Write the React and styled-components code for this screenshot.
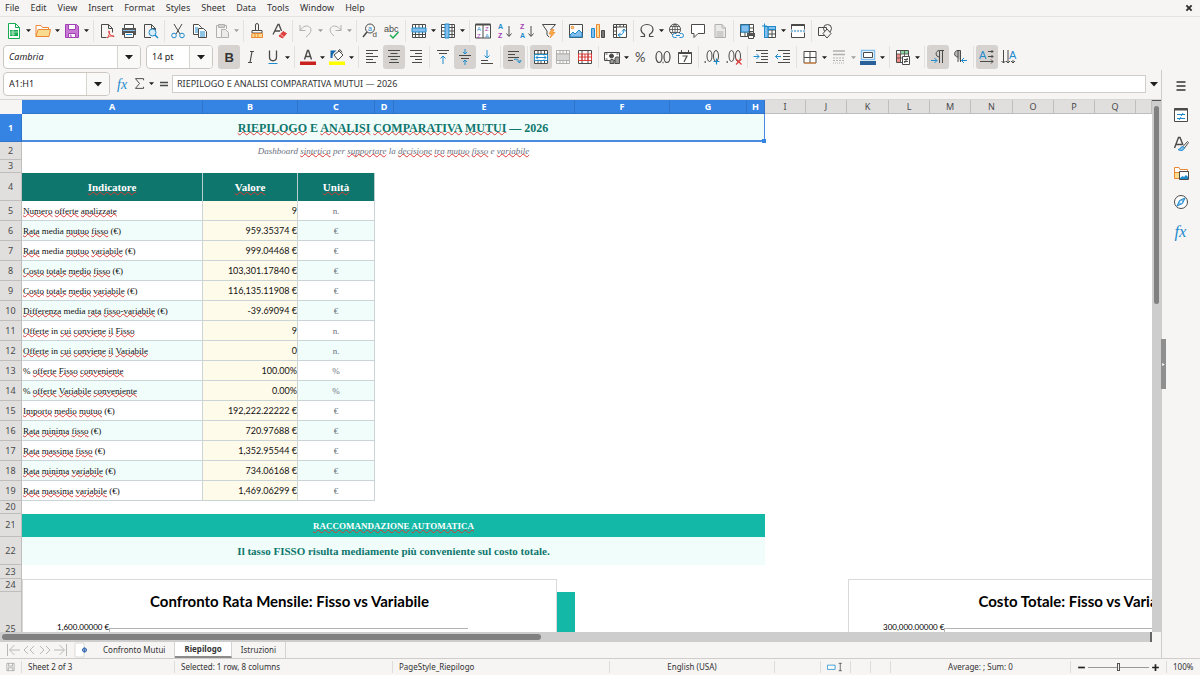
import React from 'react';
import styled, { createGlobalStyle, css } from 'styled-components';

const GlobalStyle = createGlobalStyle`
    *{
        box-sizing: border-box;
    }

    body{
        margin: 0;
        background-color: #f6f5f4;
        color: #333;
        font-family: "Noto Sans", "Open Sans", sans-serif;
        font-size: 9px;
        line-height: 16px;
    }

    button, input{
        font: inherit;
        color: inherit;
    }
`;

const Window = styled.div`
    display: flex;
    flex-direction: column;
    height: 100vh;
    overflow: hidden;
`;

const MenuBar = styled.nav`
    display: flex;
    align-items: center;
    gap: 11px;
    height: 17px;
    padding: 0 5px;
    border-bottom: 1px solid #e6e4e2;
`;

const MenuItem = styled.button`
    padding: 0;
    border: 0;
    background: none;
    line-height: 16px;
`;

const CloseButton = styled(MenuItem)`
    display: flex;
    margin-left: auto;
`;

const Toolbar = styled.div`
    display: flex;
    align-items: center;
    height: ${props => (props.$compact ? 26 : 27)}px;
    padding-left: 3px;
`;

const ToolButton = styled.button`
    display: flex;
    align-items: center;
    justify-content: center;
    width: ${props => (props.$narrow ? 16 : 22)}px;
    height: 24px;
    padding: 0;
    border: 0;
    border-radius: 3px;
    background-color: ${props => (props.$active ? '#d5d2cf' : 'transparent')};
    opacity: ${props => (props.$faded ? 0.4 : 1)};
`;

const DropButton = styled.button`
    display: flex;
    align-items: center;
    justify-content: center;
    width: 7px;
    height: 24px;
    padding: 0;
    border: 0;
    background: none;
    opacity: ${props => (props.$faded ? 0.4 : 1)};
`;

const Separator = styled.span`
    width: 1px;
    height: 22px;
    margin: 0 2px;
    background-color: #e4e2e0;

    ${DropButton} + &{
        margin-left: 3px;
    }
`;

const Combo = styled.div`
    display: flex;
    width: ${props => props.$width}px;
    height: 24px;
    margin-right: 5px;
    border: 1px solid #cdc7c2;
    border-radius: 4px;
    background-color: #fff;
    overflow: hidden;
`;

const ComboInput = styled.input`
    flex: 1;
    min-width: 0;
    padding: 0 5px;
    border: 0;
    outline: 0;
    background: none;
    color: #1e2224;
    font-style: ${props => (props.$italic ? 'italic' : 'normal')};
`;

const ComboArrow = styled.button`
    display: flex;
    align-items: center;
    justify-content: center;
    width: 23px;
    padding: 0;
    border: 0;
    border-left: 1px solid #d8d4d0;
    background-color: #f9f9f8;
`;

const Workspace = styled.div`
    display: flex;
    flex: 1;
    min-height: 0;
`;

const Document = styled.main`
    display: flex;
    flex: 1;
    flex-direction: column;
    min-width: 0;
    border-right: 1px solid #cfccc9;
`;

const FormulaBar = styled.div`
    display: flex;
    align-items: center;
    height: 30px;
    padding: 0 0 2px 3px;
    border-bottom: 1px solid #d8d6d3;
`;

const FormulaInput = styled.input`
    flex: 1;
    min-width: 0;
    height: 18px;
    padding: 0 4px;
    border: 1px solid #d0cecb;
    outline: 0;
    background-color: #fff;
`;

const SigmaDrop = styled(DropButton)`
    width: 9px;
`;

const FormulaDrop = styled(DropButton)`
    width: 15px;
`;

const SheetRow = styled.div`
    display: flex;
    flex: 1;
    min-height: 0;
`;

const SheetArea = styled.div`
    position: relative;
    flex: 1;
    min-width: 0;
    background-color: #fff;
    overflow: hidden;
`;

const Grid = styled.table`
    width: 100%;
    table-layout: fixed;
    border-collapse: separate;
    border-spacing: 0;
    font-family: "Liberation Serif", serif;
    font-size: 9px;
    line-height: 12px;
`;

const Head = styled.th`
    padding: 0;
    border: solid ${props => (props.$selected ? '#2f74c8' : '#bfbebc')};
    border-width: 0 1px 1px 0;
    background-color: ${props => (props.$selected ? '#3584e4' : '#e0dfde')};
    color: ${props => (props.$selected ? '#fff' : '#4a4a4a')};
    font-family: "Noto Sans", sans-serif;
    font-size: 9px;
    font-weight: ${props => (props.$selected ? 700 : 400)};
    line-height: 12px;
`;

const Corner = styled.td`
    height: 14px;
    padding: 0;
    background-color: #f6f5f4;
`;

const Row = styled.tr`
    height: ${props => props.$height}px;
`;

const Cell = styled.td`
    padding: 0 1px;
    white-space: nowrap;
    text-align: ${props => props.$align || 'left'};
    text-underline-offset: -1px;
`;

const TitleCell = styled(Cell)`
    position: relative;
    padding-top: 2px;
    border: solid #4a8ae0;
    border-width: 0 1px 2px 0;
    background-color: #f0fdfa;
    color: #0f766e;
    font-size: 12px;
    font-weight: 700;
`;

const FillHandle = styled.span`
    position: absolute;
    right: -2px;
    bottom: -3px;
    width: 4px;
    height: 4px;
    background-color: #3584e4;
`;

const SubtitleCell = styled(Cell)`
    color: #6b7280;
    font-style: italic;
`;

const HeaderCell = styled(Cell)`
    border-right: 1px solid #b9cfcd;
    background-color: #0f766e;
    color: #fff;
    font-size: 11px;
    font-weight: 700;
    text-underline-offset: 0;
`;

const dataBorder = css`
    border: solid #cbd5d8;
    border-width: 0 1px 1px 0;
`;

const LabelCell = styled(Cell)`
    ${dataBorder}
    padding-top: 1px;
    background-color: ${props => (props.$even ? '#f0fdfa' : '#fff')};
    color: #111;
`;

const ValueCell = styled(Cell)`
    ${dataBorder}
    padding-right: 0;
    background-color: #fffbeb;
    color: #111;
    font-family: Lato, sans-serif;
`;

const UnitCell = styled(LabelCell)`
    color: #6b7280;
`;

const BannerCell = styled(Cell)`
    background-color: #14b8a6;
    color: #fff;
    font-weight: 700;
    text-underline-offset: 0;
`;

const AdviceCell = styled(Cell)`
    background-color: #f0fdfa;
    color: #0f766e;
    font-size: 11px;
    font-weight: 700;
`;

const Typo = styled.span`
    text-decoration: underline wavy #dc3a36 1px;
    text-decoration-skip-ink: none;
`;

const Chart = styled.section`
    position: absolute;
    top: 479px;
    left: ${props => props.$left}px;
    display: flex;
    flex-direction: column;
    width: ${props => props.$width}px;
    height: 300px;
    border: 1px solid #d9d9d9;
    background-color: #fff;
    color: #000;
    font-family: Lato, sans-serif;
`;

const ChartTitle = styled.h2`
    margin: 11px 0 10px;
    text-align: center;
    font-size: 15px;
    font-weight: 700;
    line-height: 20px;
`;

const ChartBody = styled.div`
    display: flex;
    flex: 1;
    padding: 0 88px 0 34px;
    font-size: 8px;
    line-height: 12px;
`;

const Plot = styled.div`
    flex: 1;
    margin-top: 7px;
    border: solid #b3b3b3;
    border-width: 1px 0 0 1px;
`;

const VerticalScroll = styled.div`
    width: 9px;
    padding: 5px 2px;
    border-top: 1px solid #555;
    background-color: #cdcdcd;
`;

const HorizontalScroll = styled.div`
    height: 10px;
    margin-right: 9px;
    padding: 2px;
    border-right: 2px solid #666;
    background-color: #cdcdcd;
`;

const Thumb = styled.div`
    width: ${props => props.$width || '100%'};
    height: ${props => props.$height || '100%'};
    border-radius: 3px;
    background-color: #808080;
`;

const TabBar = styled.div`
    display: flex;
    align-items: center;
    height: 16px;
    padding-left: 5px;
    font-size: 8px;
`;

const NavArrows = styled.div`
    display: flex;
    width: 69px;
    opacity: 0.35;
`;

const NavButton = styled.button`
    display: flex;
    padding: 0;
    border: 0;
    background: none;
`;

const SheetTab = styled.button`
    height: 16px;
    padding: 0 9px;
    border: 0;
    border-right: 1px solid #d5d2cf;
    border-bottom: ${props => (props.$active ? '2px solid #8b8b8b' : '0')};
    background-color: ${props => (props.$active ? '#fff' : 'transparent')};
    font-weight: ${props => (props.$active ? 700 : 400)};
    line-height: 14px;

    ${NavButton} + &{
        margin-left: 4px;
    }
`;

const Sidebar = styled.aside`
    display: flex;
    flex-direction: column;
    align-items: center;
    gap: 5px;
    position: relative;
    width: 38px;
    padding-top: 4px;
`;

const SidebarHandle = styled.button`
    position: absolute;
    top: 269px;
    left: -1px;
    display: flex;
    align-items: center;
    width: 5px;
    height: 50px;
    padding: 0;
    border: 0;
    background-color: #8f8f8f;
`;

const StatusBar = styled.footer`
    display: grid;
    grid-template-columns: 22px 153fr 218fr 217fr 165fr 46px 30px 20px 20px 180fr 96px 33px;
    align-items: center;
    height: 17px;
    border-top: 1px solid #cfccc9;
    font-size: 8px;
    line-height: 12px;
`;

const StatusItem = styled.div`
    display: flex;
    align-items: center;
    justify-content: ${props => (props.$center ? 'center' : 'flex-start')};
    height: 12px;
    padding: 0 6px;
    border-right: 1px solid #dfddda;
    white-space: nowrap;

    &:last-child{
        border-right: 0;
    }
`;

const ZoomButton = styled.button`
    display: flex;
    padding: 0;
    border: 0;
    background: none;
`;

const ZoomSlider = styled.input`
    flex: 1;
    min-width: 0;
    height: 10px;
    margin: 0 2px;
    appearance: none;
    background: linear-gradient(#999, #999) center / 100% 1px no-repeat;

    &::-webkit-slider-thumb{
        appearance: none;
        width: 3px;
        height: 8px;
        border: 1px solid #555;
        background-color: #f6f5f4;
    }
`;

const INK = '#4a4a48';
const BLUE = '#1e8bcd';
const SKY = '#83beec';
const ORANGE = '#ed8733';
const RED = '#e03e3b';
const PURPLE = '#a33fb5';
const GREEN = '#18ab50';
const GREY = '#a0a09e';

const letter = { fontFamily: 'Liberation Sans, sans-serif', stroke: 'none' };
const thin = { fontFamily: 'Lato, sans-serif', stroke: 'none' };
const script = { fontFamily: 'Liberation Serif, serif', fontStyle: 'italic', stroke: 'none' };

const icons = {
    newSheet: (
        <>
            <path d="M2.500.5h7l4 4v11h-11z" fill="#fff" stroke={GREEN} />
            <path d="M9.500.5v4h4" stroke={GREEN} />
            <path d="M4 7h8v6H4z" fill={GREEN} stroke="none" />
            <path d="M4 9h8M4 11h5M7 7v6" stroke="#fff" strokeWidth=".6" />
        </>
    ),
    open: (
        <>
            <path d="M1 13.500V2.500h5l1.500 2h6v2" fill="#fff" stroke={ORANGE} />
            <path d="M1 13.500l2-7h12.500l-1.500 7z" fill="#fadc90" stroke={ORANGE} />
        </>
    ),
    save: (
        <>
            <path d="M1.500 1.500h11l2 2v11h-13z" fill="#c879d4" stroke={PURPLE} />
            <path d="M4.500 1.500h7v5h-7zM4.500 10.500h7v4h-7z" fill="#fff" stroke={PURPLE} />
            <path d="M6 12h1v2" stroke={PURPLE} />
        </>
    ),
    pdf: (
        <>
            <path d="M2.500 14.500V1.500h7l4 4v4M2.500 14.500h5M9.500 1.500v4h4" />
            <path d="M8 15c2-2 3-5 2.500-6.500S9 8 10 10s3 3.500 5 3.500c.5-1-3-1.500-7 1.500z" stroke={RED} />
        </>
    ),
    print: (
        <>
            <path d="M3.500 5V1.500h9V5" fill="#fff" />
            <path d="M1 5h14v7H1z" fill="#555" stroke="none" />
            <path d="M3.500 9.500h9v5h-9z" fill="#fff" />
            <path d="M5 11.500h6" stroke={BLUE} />
            <path d="M2 7.500h12" stroke={SKY} />
        </>
    ),
    preview: (
        <>
            <path d="M8 14.500H1.500v-13h7l4 4V7M8.500 1.500v4h4" />
            <circle cx="9.500" cy="9.500" r="3.500" fill="#d8ecfb" stroke={BLUE} />
            <path d="M12 12l3 3" stroke={BLUE} strokeWidth="1.500" />
        </>
    ),
    cut: (
        <>
            <path d="M4 1l6 10M12 1L6 11" />
            <circle cx="4" cy="12.500" r="2.300" stroke={BLUE} />
            <circle cx="12" cy="12.500" r="2.300" stroke={BLUE} />
        </>
    ),
    copy: (
        <>
            <path d="M1.500 1.500h5l3 3v7h-8z" fill="#fff" />
            <path d="M6.500 5.500h5l3 3v6h-8z" fill="#fff" />
            <path d="M3 5h3M3 7h3M3 9h3M8 9h5M8 11h5M8 13h5" stroke={BLUE} />
        </>
    ),
    paste: (
        <>
            <path d="M5 2.500H2.500v12H7M10 2.500h2.500V6" />
            <path d="M4.500 1.500h6v3h-6z" fill={GREY} />
            <path d="M7.500 6.500h4l3 3v5h-7z" fill="#ddd" />
        </>
    ),
    clone: (
        <>
            <path d="M6.500 7V2a1.500 1.500 0 013 0v5" />
            <path d="M3 7.500h10v2.500H3z" fill="#fff" />
            <path d="M3 10.500h10.500v4h-11z" fill="#fadc90" stroke={ORANGE} />
            <path d="M6 11v3M9 11v3" stroke={ORANGE} />
        </>
    ),
    clearFormat: (
        <>
            <path d="M2 11.500L7 1.500h1L10.500 8M4 8h5" strokeWidth="1.300" />
            <path d="M8 13l4-4.500 3.500 2-4 4.500z" fill={RED} stroke={RED} />
            <path d="M9.500 11.500l3 2" stroke="#fff" strokeWidth=".7" />
        </>
    ),
    undo: <path d="M2 2v5.500h5.500M2 7.500C5 3 9 2 11.500 4s2 6-3.500 10" />,
    redo: <path d="M14 2v5.500H8.500M14 7.500C11 3 7 2 4.500 4S3 10 7 13" />,
    find: (
        <>
            <circle cx="8" cy="5.500" r="4.500" />
            <path d="M5 9L1 14" strokeWidth="1.500" />
            <text x="6" y="8" fontSize="7" fill={BLUE} {...letter}>a</text>
            <text x="10.500" y="14" fontSize="8" fill={INK} {...letter}>d</text>
        </>
    ),
    spelling: (
        <>
            <text x="0" y="8.500" fontSize="9" fill={INK} {...letter}>abc</text>
            <path d="M6 12l3 3 5.500-6" stroke={GREEN} strokeWidth="1.400" />
        </>
    ),
    row: (
        <>
            <path d="M1.500 1.500h13v13h-13zM4.500 1.500v13M8 1.500v13M11.500 1.500v13M1.500 11.500h13" fill="#fff" />
            <path d="M1 5h14v4H1z" fill={SKY} stroke={BLUE} />
        </>
    ),
    column: (
        <>
            <path d="M1.500 1.500h13v13h-13zM1.500 4.500h13M1.500 8h13M1.500 11.500h13M12 1.500v13" fill="#fff" />
            <path d="M5 1h4v14H5z" fill={SKY} stroke={BLUE} />
        </>
    ),
    sort: (
        <>
            <path d="M.5 1.500h15v13.500H.5zM8 1.500V15" fill="#fff" />
            <path d="M.5 1.500h15" strokeWidth="2" />
            <text x="2" y="8" fontSize="6" fill={BLUE} {...letter}>A</text>
            <text x="2" y="14.500" fontSize="6" fill={PURPLE} {...letter}>Z</text>
            <text x="10" y="8" fontSize="6" fill={PURPLE} {...letter}>Z</text>
            <text x="10" y="14.500" fontSize="6" fill={BLUE} {...letter}>A</text>
        </>
    ),
    sortAsc: (
        <>
            <text x="1" y="6.400" fontSize="7" fontWeight="700" fill={BLUE} {...letter}>A</text>
            <text x="1" y="14.500" fontSize="7" fontWeight="700" fill={PURPLE} {...letter}>Z</text>
            <path d="M12 3v10M9.500 10.500l2.500 3 2.500-3" />
        </>
    ),
    sortDesc: (
        <>
            <text x="1" y="6.400" fontSize="7" fontWeight="700" fill={PURPLE} {...letter}>Z</text>
            <text x="1" y="14.500" fontSize="7" fontWeight="700" fill={BLUE} {...letter}>A</text>
            <path d="M12 3v10M9.500 10.500l2.500 3 2.500-3" />
        </>
    ),
    filter: (
        <>
            <path d="M1.500 1.500h13L9.500 7M1.500 1.500L6 8v4l2 2" />
            <path d="M10.500 6.500L8 11h2.500L9 15l5-5.500h-2.500l1.500-3z" fill="#fbb040" stroke={ORANGE} strokeWidth=".7" />
        </>
    ),
    image: (
        <>
            <path d="M1.500 1.500h13v13h-13z" fill="#fff" />
            <circle cx="4.500" cy="4.500" r="1.300" stroke={ORANGE} fill="#fadc90" />
            <path d="M2 12l3-3 2 2 4-4 3 3v4H2z" fill={SKY} stroke={BLUE} />
        </>
    ),
    chart: (
        <>
            <path d="M1.500 5.500h3v9h-3z" fill={SKY} stroke={BLUE} />
            <path d="M6.500 1.500h3v13h-3z" fill="#fadc90" stroke={ORANGE} />
            <path d="M11.500 7.500h3v7h-3z" fill="#797774" />
        </>
    ),
    pivot: (
        <>
            <path d="M1.500 1.500h13v13h-13zM1.500 4h13M4.500 1.500v13" fill="#fff" />
            <path d="M1.500 4.500h3M1.500 8h3M1.500 11.500h3M8 1.500V4M11.500 1.500V4" />
            <path d="M7 12c3 0 5-2 5-5M10 8.500L12 6l2 2.500M8.500 10L6 12l2.500 2" stroke={BLUE} />
        </>
    ),
    omega: <path d="M1.500 13.500h4v-2C3 10 2 8.500 2 6.500 2 3.500 4.500 1.500 8 1.500s6 2 6 5c0 2-1 3.500-3.500 5v2h4" strokeWidth="1.200" />,
    link: (
        <>
            <circle cx="7" cy="6.500" r="5.500" fill="#fff" />
            <path d="M1.500 6.500h11M7 1v11M2.500 3.500h9M2.500 9.500h9M7 1C3.500 4 3.500 9 7 12M7 1c3.500 3 3.500 8 0 11" strokeWidth=".8" />
            <path d="M5 10h10v5H5z" fill="#f6f5f4" stroke="none" />
            <path d="M8.500 10.500H6.500a2 2 0 000 4h2M11.500 10.500h2a2 2 0 010 4h-2M8 12.500h4" stroke={BLUE} />
        </>
    ),
    comment: <path d="M1.500 1.500h13v9H8l-4 4v-4H1.500z" fill="#fff" />,
    footer: <path d="M3 1.500h7l3.500 3.500v9.500H3zM10 1.500V5h3.500M4.500 9h7M4.500 11h7M4.500 13h7" fill="#ddd" />,
    printArea: (
        <>
            <path d="M1.500 1.500h13v12h-13zM1.500 5h13M1.500 9h13M6 1.500v12M10.500 1.500v12" fill="#fff" />
            <path d="M2 2h8v7H2z" fill={SKY} stroke={BLUE} />
            <path d="M8 10h8v4H8z" fill="#555" stroke="none" />
            <path d="M9.500 12.500h5v3h-5zM9.500 8.500h5V10" fill="#fff" />
        </>
    ),
    freeze: (
        <>
            <path d="M3.500 3.500h11v11h-11zM3.500 7h11M3.500 11h11M7 3.500v11M11 3.500v11" fill="#fff" />
            <path d="M3.500 3.500h3.500v11H3.500zM7 3.500h7.500v3H7z" fill={SKY} stroke={BLUE} />
            <path d="M1 3h5M3.500 .5v5" stroke={BLUE} />
        </>
    ),
    split: (
        <>
            <path d="M1.500 6.500v-5h13v5M1.500 9.500v5h13v-5" fill="#fff" />
            <path d="M1.500 2h13" strokeWidth="2" />
            <path d="M1 8h14" stroke={BLUE} strokeDasharray="2 1" />
        </>
    ),
    shapes: (
        <>
            <path d="M1.500 4.500h8v8h-8z" />
            <circle cx="10.500" cy="5.500" r="4" />
            <path d="M10 6l4 4.500-4 4.500-4-4.500z" fill="#f6f5f4" />
        </>
    ),
    bold: <text x="3.500" y="12.800" fontSize="13" fontWeight="700" fill="#333" {...letter}>B</text>,
    italic: <path d="M7 2.500h4M5 13.500h4M9 2.500l-2 11" strokeWidth="1.200" />,
    underline: (
        <>
            <path d="M4.500 1.500V8c0 5 7 5 7 0V1.500" strokeWidth="1.300" />
            <path d="M3.500 14.500h9" stroke={BLUE} />
        </>
    ),
    fontColor: (
        <>
            <path d="M4.500 10.500L7.500 1.500h1l3 9M5.500 7.500h5" strokeWidth="1.400" />
            <path d="M0 12.500h16v3.500H0z" fill="#c9211e" stroke="none" />
        </>
    ),
    highlight: (
        <>
            <path d="M5 6l5-4 4 4-5 5z" fill="#fff" />
            <path d="M9 2l2-1.500 2 3" />
            <path d="M1.500 9V1.500h6C4.500 4 3.500 5 3.500 9z" fill="#1668a8" stroke="none" />
            <path d="M0 12.500h16v3.500H0z" fill="#ffff00" stroke="none" />
        </>
    ),
    alignLeft: <path d="M2 1.500h12M2 4.500h7M2 7.500h12M2 10.500h7M2 13.500h10" />,
    alignCenter: <path d="M2 1.500h12M4.500 4.500h7M2 7.500h12M4.500 10.500h7M3 13.500h10" />,
    alignRight: <path d="M2 1.500h12M7 4.500h7M2 7.500h12M7 10.500h7M4 13.500h10" />,
    alignTop: (
        <>
            <path d="M2 1.500h12M4 4.500h8" />
            <path d="M8 15V7M5.500 9.500L8 7l2.500 2.500" stroke={BLUE} />
        </>
    ),
    alignMiddle: (
        <>
            <path d="M2 6.500h12M4 9.500h8" />
            <path d="M8 0v5M6 3l2 2 2-2M8 16v-5M6 13l2-2 2 2" stroke={BLUE} />
        </>
    ),
    alignBottom: (
        <>
            <path d="M2 11.500h7M2 14.500h12" />
            <path d="M8 1v8M5.500 6.500L8 9l2.500-2.500" stroke={BLUE} />
        </>
    ),
    wrap: (
        <>
            <path d="M2 2.500h11M2 5.500h7M2 8.500h11M2 11.500h5" />
            <path d="M8 10.500c3-1 5 0 5.500 3M11 11.500l2.500 2.500 1.500-3" stroke={BLUE} />
        </>
    ),
    merge: (
        <>
            <path d="M1.500 1.500h13v13h-13zM1.500 5h13M1.500 11.500h13M5 1.500V5M8 1.500V5M11.500 1.500V5M5 11.500v3M8 11.500v3M11.500 11.500v3" fill="#fff" />
            <path d="M1.500 5.500h13v6h-13z" fill="#fff" stroke={BLUE} />
            <path d="M3 8.500h10M5 6.500l-2 2 2 2M11 6.500l2 2-2 2" stroke={BLUE} />
        </>
    ),
    mergeCells: (
        <>
            <path d="M1.500 1.500h13v13h-13zM1.500 5h13M1.500 11.500h13M5 1.500V5M8 1.500V5M11.500 1.500V5M5 11.500v3M8 11.500v3M11.500 11.500v3" fill="#fff" />
            <path d="M1.500 5h13v6.500h-13z" fill="#aaa" />
        </>
    ),
    splitCells: (
        <>
            <path d="M1.500 1.500h13v13h-13zM5 1.500v13M11 1.500v13" fill="#fff" />
            <path d="M1.500 5h13M1.500 11.500h13M1.500 5v6.500M14.500 5v6.500M5 5v6.500M8 5v6.500M11 5v6.500M1.500 8h13" stroke={RED} />
        </>
    ),
    currency: (
        <>
            <path d="M.5 3.500h15v8H.5z" fill="#fff" />
            <path d="M1.500 5h2M12.500 5h2M1.500 10h2" />
            <circle cx="7.500" cy="7" r="2" fill={INK} />
            <path d="M6 11.500c0-1.500 4-1.500 4 0v3H6zM11 9c0-1.500 4.500-1.500 4.500 0v5.500H11z" fill="#999" />
        </>
    ),
    percent: <text x="2" y="12.800" fontSize="13" fill={INK} {...thin}>%</text>,
    number: (
        <>
            <ellipse cx="4" cy="8" rx="3" ry="5.500" strokeWidth="1.200" />
            <ellipse cx="12" cy="8" rx="3" ry="5.500" strokeWidth="1.200" />
            <path d="M7.500 13.500h1" strokeWidth="1.400" />
        </>
    ),
    date: (
        <>
            <path d="M1.500 3.500h13v11h-13zM4.500 1v2.500M11.500 1v2.500" fill="#fff" />
            <path d="M1.500 4h13" strokeWidth="2" />
            <path d="M5.500 7h4.500l-3 6" strokeWidth="1.200" />
        </>
    ),
    addDecimal: (
        <>
            <path d="M.5 13h1.500" strokeWidth="1.500" />
            <ellipse cx="5.500" cy="7" rx="2.500" ry="5.500" />
            <ellipse cx="12" cy="7" rx="2.500" ry="5.500" />
            <path d="M9.500 12.500h6M12.500 9.500v6" stroke={BLUE} strokeWidth="1.200" />
        </>
    ),
    removeDecimal: (
        <>
            <path d="M.5 13h1.500" strokeWidth="1.500" />
            <ellipse cx="5.500" cy="7" rx="2.500" ry="5.500" />
            <ellipse cx="12" cy="7" rx="2.500" ry="5.500" />
            <path d="M10 10l5.500 5.500M15.500 10L10 15.500" stroke={RED} strokeWidth="1.200" />
        </>
    ),
    indent: (
        <>
            <path d="M3 1.500h12M8 4.500h7M8 7.500h7M8 10.500h7M3 13.500h12" />
            <path d="M.5 7.500h5.500M3.500 5L6 7.500 3.500 10" stroke={BLUE} />
        </>
    ),
    outdent: (
        <>
            <path d="M3 1.500h12M8 4.500h7M8 7.500h7M8 10.500h7M3 13.500h12" />
            <path d="M.5 7.500H6M3 5L.5 7.500 3 10" stroke={BLUE} />
        </>
    ),
    borders: (
        <>
            <path d="M2 2.500h12v11.500H2zM8 2.500V14M2 8.500h12" fill="#fff" />
            <path d="M2 14h12" stroke={ORANGE} />
        </>
    ),
    borderStyle: (
        <>
            <path d="M2 2h12M2 5.500h12" strokeWidth="1.500" />
            <path d="M2 9h12M2 11.500h12" strokeDasharray="2 1" />
            <path d="M2 14h12" strokeDasharray="1 1" />
        </>
    ),
    borderColor: (
        <>
            <path d="M1.500 1.500h13v9h-13z" fill="#fff" stroke={SKY} strokeWidth="1.500" />
            <path d="M3.500 3.500h9v5h-9z" />
            <path d="M0 12h16v4H0z" fill="#2a6099" stroke="none" />
        </>
    ),
    conditional: (
        <>
            <path d="M1.500 1.500h12v12h-12z" fill="#fff" />
            <path d="M2 5h4v8H2z" fill="#ef8a86" stroke="none" />
            <path d="M6 2h7v3H6z" fill="#8fd4a4" stroke="none" />
            <path d="M1.500 5h12M1.500 9h12M5.500 1.500v12M9.500 1.500v12" strokeWidth=".8" />
            <path d="M7.500 7.500h7v8h-7z" fill="#fff" />
            <path d="M9 10.500h4M9 12.500h4M12.500 9L9.500 14" />
        </>
    ),
    leftToRight: (
        <>
            <path d="M9.500 8C5 8 5 1.500 9.500 1.500H14M9.500 1.500V14M12.500 1.500V14" />
            <path d="M1 11.500h6M4.500 9L7 11.500 4.500 14" stroke={BLUE} />
        </>
    ),
    rightToLeft: (
        <>
            <path d="M6 8C1.500 8 1.500 1.500 6 1.500h2.500V13M6 1.500V13" fill="#bbb" />
            <path d="M15 11.500H9.500M12 9l-2.500 2.500L12 14" stroke={BLUE} />
        </>
    ),
    textHorizontal: (
        <>
            <text x="0" y="10" fontSize="11" fill={BLUE} {...letter}>A</text>
            <path d="M9 2.500h5M9 7.500h5M12.500 1l1.500 1.500L12.500 4M12.500 6L14 7.500 12.500 9M1 12.500h13M12 10.500l2 2-2 2" />
        </>
    ),
    textVertical: (
        <>
            <text x="8" y="10" fontSize="11" fill={BLUE} {...letter}>A</text>
            <path d="M2.500 1v13M7 1v13M12 11v3M.5 12l2 2 2-2M5 12l2 2 2-2M10 12l2 2 2-2" />
        </>
    ),
    fx: <text x="2" y="12.600" fontSize="14" fill={BLUE} {...script}>fx</text>,
    sigma: <path d="M13 4V2H3l5 6-5 6h10v-2" strokeWidth="1.200" />,
    equals: <path d="M4 6.500h8M4 9.500h8" strokeWidth="1.500" />,
    menu: <path d="M3.500 4h9M3.500 8h9M3.500 12h9" stroke="#333" strokeWidth="1.500" />,
    properties: (
        <>
            <path d="M1.500 1.500h13v13h-13z" fill="#fff" />
            <path d="M1.500 2.500h13" strokeWidth="2" />
            <path d="M4 7.500h8M4 11.500h8M10 6L8 9M8 10l-2 3" stroke={BLUE} />
        </>
    ),
    styles: (
        <>
            <path d="M1.500 12L5.500 1.500h1.500L10 9M3 8.500h6" strokeWidth="1.400" />
            <path d="M10 10.500l4.500-5 1 1-4 5.500z" fill="#fff" />
            <path d="M5 13.500c3 0 2-3 5-3l1.500 1.500c-1 3-4 3-6.500 1.500z" fill={SKY} stroke={BLUE} />
        </>
    ),
    gallery: (
        <>
            <path d="M1.500 13.500v-11h4.500l1 2h7.500v3" fill="#fff" stroke={ORANGE} />
            <path d="M1.500 13.500v-6h5v6z" fill="#fadc90" stroke={ORANGE} />
            <path d="M6.500 6.500h9v8h-9z" fill="#fff" />
            <path d="M7 13l2.500-2 1.500 1 2-2 2 2v2H7z" fill={BLUE} stroke="none" />
        </>
    ),
    navigator: (
        <>
            <circle cx="8" cy="8" r="6.500" fill="#fff" />
            <path d="M12 4L9.500 9.500 4 12l2.500-5.500z" fill={SKY} stroke={BLUE} />
            <circle cx="8" cy="8" r="1" fill="#fff" stroke="none" />
        </>
    ),
    close: <path d="M4.500 4.500l7 7M11.500 4.500l-7 7" stroke="#2e2e2e" strokeWidth="2.500" />,
    first: <path d="M2.500 2v12M15 8H5M9.500 3L4.500 8l5 5" />,
    previous: <path d="M7 4L3 8l4 4M13 4L9 8l4 4" />,
    next: <path d="M3 4l4 4-4 4M9 4l4 4-4 4" />,
    last: <path d="M13.500 2v12M1 8h10M6.500 3l5 5-5 5" />,
    addSheet: (
        <>
            <path d="M1 1h9v14H1z" fill="#fff" stroke="#dcdad8" />
            <circle cx="10.500" cy="8" r="2" stroke="#2a5fb0" />
            <path d="M10.500 5.500v5M8 8h5" stroke="#2a5fb0" strokeWidth=".8" />
        </>
    ),
    disk: <path d="M1.500 1.500h13v13h-13zM4.500 1.500v5h7v-5M4 14.500v-5h8v5" stroke="#888" />,
    selectionMode: <path d="M.8 4.500h14.400v8H.8z" fill="#fff" stroke={BLUE} strokeWidth="1.500" />,
    insertMode: <path d="M5 1h6M5 15h6M8 1v14" stroke="#333" strokeWidth="1.300" />,
    minus: <path d="M2 8h12" stroke="#222" strokeWidth="3" />,
    plus: <path d="M2 8h12M8 2v12" stroke="#222" strokeWidth="3" />,
    handle: <path d="M4 3l8 5-8 5z" fill="#fff" stroke="none" />,
};

const Icon = ({ name, size = 16 }) => (
    <svg width={size} height={size} viewBox="0 0 16 16" fill="none" stroke={INK} aria-hidden="true">
        {icons[name]}
    </svg>
);

const Arrow = ({ size = 7 }) => (
    <svg width={size} height={size} viewBox="0 0 8 8" aria-hidden="true">
        <path d="M0 2h8L4 6.500z" fill="#1e1e1e" />
    </svg>
);

const SEP = { sep: true };
const tool = (icon, label, options) => ({ icon, label, ...options });
const drop = { drop: true };
const active = { active: true };

const menus = ['File', 'Edit', 'View', 'Insert', 'Format', 'Styles', 'Sheet', 'Data', 'Tools', 'Window', 'Help'];

const standardTools = [
    tool('newSheet', 'New', drop), tool('open', 'Open', drop), tool('save', 'Save', drop), SEP,
    tool('pdf', 'Export as PDF'), tool('print', 'Print'), tool('preview', 'Print Preview'), SEP,
    tool('cut', 'Cut'), tool('copy', 'Copy'), tool('paste', 'Paste', { drop: true, faded: true }), SEP,
    tool('clone', 'Clone Formatting'), tool('clearFormat', 'Clear Formatting'), SEP,
    tool('undo', 'Undo', { drop: true, faded: true }), tool('redo', 'Redo', { drop: true, faded: true }), SEP,
    tool('find', 'Find and Replace'), tool('spelling', 'Spelling'), SEP,
    tool('row', 'Row', drop), tool('column', 'Column', drop), SEP,
    tool('sort', 'Sort'), tool('sortAsc', 'Sort Ascending'), tool('sortDesc', 'Sort Descending'), tool('filter', 'AutoFilter'), SEP,
    tool('image', 'Insert Image'), tool('chart', 'Insert Chart'), tool('pivot', 'Pivot Table'), SEP,
    tool('omega', 'Special Character', drop), tool('link', 'Hyperlink'), tool('comment', 'Comment'), tool('footer', 'Headers and Footers', { faded: true }), SEP,
    tool('printArea', 'Print Area'), tool('freeze', 'Freeze Rows and Columns', drop), tool('split', 'Split Window'), SEP,
    tool('shapes', 'Show Draw Functions'),
];

const formattingTools = [
    tool('bold', 'Bold', active), tool('italic', 'Italic'), tool('underline', 'Underline', drop),
    SEP, tool('fontColor', 'Font Color', drop), tool('highlight', 'Background Color', drop), SEP,
    tool('alignLeft', 'Align Left'), tool('alignCenter', 'Center Horizontally', active), tool('alignRight', 'Align Right'), SEP,
    tool('alignTop', 'Align Top'), tool('alignMiddle', 'Center Vertically', active), tool('alignBottom', 'Align Bottom'), SEP,
    tool('wrap', 'Wrap Text', active), SEP,
    tool('merge', 'Merge and Center Cells', active), tool('mergeCells', 'Merge Cells', { faded: true }), tool('splitCells', 'Unmerge Cells'), SEP,
    tool('currency', 'Format as Currency', drop), tool('percent', 'Format as Percent'), tool('number', 'Format as Number'), tool('date', 'Format as Date'), SEP,
    tool('addDecimal', 'Add Decimal Place'), tool('removeDecimal', 'Delete Decimal Place'), SEP,
    tool('indent', 'Increase Indent'), tool('outdent', 'Decrease Indent'), SEP,
    tool('borders', 'Borders', drop), tool('borderStyle', 'Border Style', { drop: true, faded: true }), tool('borderColor', 'Border Color', drop), SEP,
    tool('conditional', 'Conditional', drop), SEP,
    tool('leftToRight', 'Left-To-Right', active), tool('rightToLeft', 'Right-To-Left'), SEP,
    tool('textHorizontal', 'Text direction from left to right', active), tool('textVertical', 'Text direction from top to bottom'),
];

const sidebarTools = [
    tool('menu', 'Sidebar Settings'), tool('properties', 'Properties'), tool('styles', 'Styles'),
    tool('gallery', 'Gallery'), tool('navigator', 'Navigator'), tool('fx', 'Functions', { size: 19 }),
];

const columns = [
    ['A', 181], ['B', 95], ['C', 77], ['D', 19], ['E', 181], ['F', 95], ['G', 77], ['H', 18],
    ['I', 41], ['J', 41], ['K', 42], ['L', 41], ['M', 41], ['N', 42], ['O', 41], ['P', 41], ['Q', 41],
];

// words between asterisks get the spelling underline
const indicators = [
    ['*Numero* *offerte* *analizzate*', '9', 'n.'],
    ['*Rata* media *mutuo* *fisso* (€)', '959.35374 €', '€'],
    ['*Rata* media *mutuo* *variabile* (€)', '999.04468 €', '€'],
    ['*Costo* *totale* *medio* *fisso* (€)', '103,301.17840 €', '€'],
    ['*Costo* *totale* *medio* *variabile* (€)', '116,135.11908 €', '€'],
    ['*Differenza* media *rata* *fisso-variabile* (€)', '-39.69094 €', '€'],
    ['*Offerte* in *cui* *conviene* *il* *Fisso*', '9', 'n.'],
    ['*Offerte* in *cui* *conviene* *il* *Variabile*', '0', 'n.'],
    ['% *offerte* *Fisso* *conveniente*', '100.00%', '%'],
    ['% *offerte* *Variabile* *conveniente*', '0.00%', '%'],
    ['*Importo* *medio* *mutuo* (€)', '192,222.22222 €', '€'],
    ['*Rata* *minima* *fisso* (€)', '720.97688 €', '€'],
    ['*Rata* *massima* *fisso* (€)', '1,352.95544 €', '€'],
    ['*Rata* *minima* *variabile* (€)', '734.06168 €', '€'],
    ['*Rata* *massima* *variabile* (€)', '1,469.06299 €', '€'],
];

const Spelled = ({ text }) => text.split('*').map((part, i) => (
    i % 2 ? <Typo key={i}>{part}</Typo> : part
));

const Tools = ({ items }) => items.map((item, i) => {
    if (item.sep) {
        return <Separator key={i} />;
    }
    return (
        <React.Fragment key={i}>
            <ToolButton type="button" aria-label={item.label} $active={item.active} $faded={item.faded}>
                <Icon name={item.icon} />
            </ToolButton>
            {item.drop && (
                <DropButton type="button" aria-label={`${item.label} options`} $faded={item.faded}>
                    <Arrow size={5} />
                </DropButton>
            )}
        </React.Fragment>
    );
});

const ComboBox = ({ label, value, width, italic }) => (
    <Combo $width={width}>
        <ComboInput aria-label={label} defaultValue={value} $italic={italic} />
        <ComboArrow type="button" aria-label={`${label} list`}><Arrow size={8} /></ComboArrow>
    </Combo>
);

const SheetLine = ({ number, height, selected, children }) => (
    <Row $height={height}>
        <Head scope="row" $selected={selected}>{number}</Head>
        {children}
    </Row>
);

const Sheet = () => (
    <Grid>
        <colgroup>
            <col width="22" />
            {columns.map(([name, width]) => <col key={name} width={width} />)}
            <col />
        </colgroup>
        <thead>
            <tr>
                <Corner />
                {columns.map(([name], i) => <Head key={name} scope="col" $selected={i < 8}>{name}</Head>)}
                <Head />
            </tr>
        </thead>
        <tbody>
            <SheetLine number={1} height={28} selected>
                <TitleCell colSpan={8} $align="center">
                    <Spelled text="*RIEPILOGO* E *ANALISI* *COMPARATIVA* *MUTUI* — 2026" />
                    <FillHandle />
                </TitleCell>
            </SheetLine>
            <SheetLine number={2} height={18}>
                <SubtitleCell colSpan={8} $align="center">
                    <Spelled text="Dashboard *sintetica* per *supportare* la *decisione* *tra* *mutuo* *fisso* e *variabile*" />
                </SubtitleCell>
            </SheetLine>
            <SheetLine number={3} height={13} />
            <SheetLine number={4} height={28}>
                <HeaderCell $align="center"><Typo>Indicatore</Typo></HeaderCell>
                <HeaderCell $align="center"><Typo>Valore</Typo></HeaderCell>
                <HeaderCell $align="center"><Typo>Unità</Typo></HeaderCell>
            </SheetLine>
            {indicators.map(([label, value, unit], i) => (
                <SheetLine key={label} number={i + 5} height={20}>
                    <LabelCell $even={i % 2 === 1}><Spelled text={label} /></LabelCell>
                    <ValueCell $align="right">{value}</ValueCell>
                    <UnitCell $align="center" $even={i % 2 === 1}>{unit}</UnitCell>
                </SheetLine>
            ))}
            <SheetLine number={20} height={13} />
            <SheetLine number={21} height={23}>
                <BannerCell colSpan={8} $align="center"><Spelled text="*RACCOMANDAZIONE* *AUTOMATICA*" /></BannerCell>
            </SheetLine>
            <SheetLine number={22} height={28}>
                <AdviceCell colSpan={8} $align="center">Il tasso FISSO risulta mediamente più conveniente sul costo totale.</AdviceCell>
            </SheetLine>
            <SheetLine number={23} height={14} />
            <SheetLine number={24} height={13} />
            <SheetLine number={25} height={74}>
                <BannerCell colSpan={5} />
            </SheetLine>
        </tbody>
    </Grid>
);

const App = () => (
    <>
        <GlobalStyle />
        <Window>
            <MenuBar>
                {menus.map(name => <MenuItem key={name} type="button">{name}</MenuItem>)}
                <CloseButton type="button" aria-label="Close Document"><Icon name="close" size={12} /></CloseButton>
            </MenuBar>
            <Toolbar><Tools items={standardTools} /></Toolbar>
            <Toolbar $compact>
                <ComboBox label="Font Name" value="Cambria" width={138} italic />
                <ComboBox label="Font Size" value="14 pt" width={67} />
                <Tools items={formattingTools} />
            </Toolbar>
            <Workspace>
                <Document>
                    <FormulaBar>
                        <ComboBox label="Name Box" value="A1:H1" width={107} />
                        <ToolButton type="button" aria-label="Function Wizard" $narrow><Icon name="fx" /></ToolButton>
                        <ToolButton type="button" aria-label="Select Function" $narrow><Icon name="sigma" size={13} /></ToolButton>
                        <SigmaDrop type="button" aria-label="Select Function options"><Arrow size={5} /></SigmaDrop>
                        <ToolButton type="button" aria-label="Formula" $narrow><Icon name="equals" /></ToolButton>
                        <FormulaInput aria-label="Input line" defaultValue="RIEPILOGO E ANALISI COMPARATIVA MUTUI — 2026" />
                        <FormulaDrop type="button" aria-label="Expand Formula Bar"><Arrow size={8} /></FormulaDrop>
                    </FormulaBar>
                    <SheetRow>
                        <SheetArea>
                            <Sheet />
                            <Chart $left={22} $width={535}>
                                <ChartTitle>Confronto Rata Mensile: Fisso vs Variabile</ChartTitle>
                                <ChartBody>1,600.00000 €<Plot /></ChartBody>
                            </Chart>
                            <Chart $left={848} $width={464}>
                                <ChartTitle>Costo Totale: Fisso vs Variabile</ChartTitle>
                                <ChartBody>300,000.00000 €<Plot /></ChartBody>
                            </Chart>
                        </SheetArea>
                        <VerticalScroll><Thumb $height="38%" /></VerticalScroll>
                    </SheetRow>
                    <HorizontalScroll><Thumb $width="47%" /></HorizontalScroll>
                    <TabBar>
                        <NavArrows>
                            <NavButton type="button" aria-label="First Sheet"><Icon name="first" /></NavButton>
                            <NavButton type="button" aria-label="Previous Sheet"><Icon name="previous" /></NavButton>
                            <NavButton type="button" aria-label="Next Sheet"><Icon name="next" /></NavButton>
                            <NavButton type="button" aria-label="Last Sheet"><Icon name="last" /></NavButton>
                        </NavArrows>
                        <NavButton type="button" aria-label="Add Sheet"><Icon name="addSheet" /></NavButton>
                        <SheetTab type="button">Confronto Mutui</SheetTab>
                        <SheetTab type="button" $active>Riepilogo</SheetTab>
                        <SheetTab type="button">Istruzioni</SheetTab>
                    </TabBar>
                </Document>
                <Sidebar>
                    {sidebarTools.map(item => (
                        <ToolButton key={item.icon} type="button" aria-label={item.label}><Icon name={item.icon} size={item.size} /></ToolButton>
                    ))}
                    <SidebarHandle type="button" aria-label="Hide Sidebar"><Icon name="handle" size={5} /></SidebarHandle>
                </Sidebar>
            </Workspace>
            <StatusBar>
                <StatusItem><Icon name="disk" size={12} /></StatusItem>
                <StatusItem>Sheet 2 of 3</StatusItem>
                <StatusItem>Selected: 1 row, 8 columns</StatusItem>
                <StatusItem>PageStyle_Riepilogo</StatusItem>
                <StatusItem $center>English (USA)</StatusItem>
                <StatusItem />
                <StatusItem><Icon name="selectionMode" size={12} /><Icon name="insertMode" size={12} /></StatusItem>
                <StatusItem />
                <StatusItem />
                <StatusItem $center>Average: ; Sum: 0</StatusItem>
                <StatusItem>
                    <ZoomButton type="button" aria-label="Zoom Out"><Icon name="minus" size={9} /></ZoomButton>
                    <ZoomSlider type="range" aria-label="Zoom" defaultValue={50} />
                    <ZoomButton type="button" aria-label="Zoom In"><Icon name="plus" size={9} /></ZoomButton>
                </StatusItem>
                <StatusItem>100%</StatusItem>
            </StatusBar>
        </Window>
    </>
);

export default App;
